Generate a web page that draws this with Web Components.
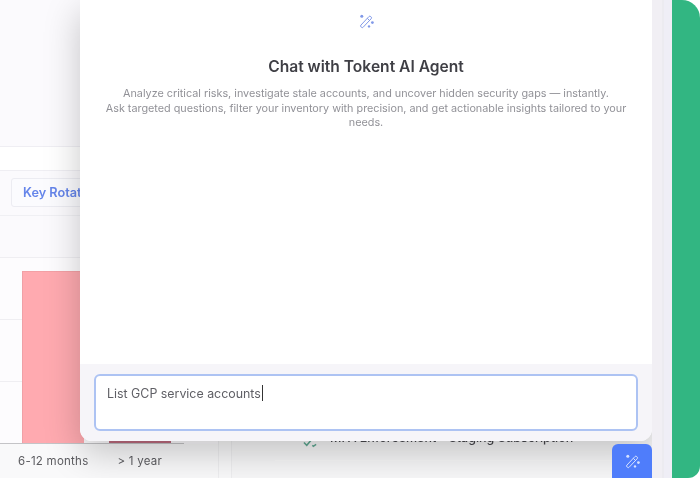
<!DOCTYPE html>
<html lang="en">
<head>
<meta charset="utf-8">
<title>Chat with Tokent AI Agent</title>
<style>
  html, body { margin: 0; height: 100%; overflow: hidden; background: #fff; }
  body { font-family: Inter, "Liberation Sans", sans-serif; }
</style>
</head>
<body>
<app-shell>
  <dash-backdrop></dash-backdrop>
  <chat-panel>
    <chat-input slot="footer" value="List GCP service accounts"></chat-input>
  </chat-panel>
</app-shell>

<script>
// Wand with sparkles, used in the chat header and on the launcher button
class WandIcon extends HTMLElement {
  constructor() {
    super();
    const shadow = this.attachShadow({ mode: 'open' });
    shadow.innerHTML = `
      <style>
        :host { display: inline-flex; width: 16px; height: 16px; color: inherit; }
        svg { width: 100%; height: 100%; display: block; }
      </style>
      <svg viewBox="0 0 16 16" fill="none" stroke="currentColor" stroke-width="1" stroke-linejoin="round">
        <path d="M3 12 10.9 3.6a1.3 1.3 0 0 1 1.9 0l.3.3a1.3 1.3 0 0 1 0 1.9L5.2 14.2a1.3 1.3 0 0 1-1.9 0l-.3-.3a1.3 1.3 0 0 1 0-1.9Z"/>
        <path d="M9.3 5.3l2.2 2.2"/>
        <g fill="currentColor" stroke="none">
          <circle cx="3.8" cy="3.2" r="1.5"/>
          <circle cx="14.4" cy="9.6" r="1.4"/>
          <circle cx="11" cy="13.4" r="1.2"/>
        </g>
      </svg>
    `;
  }
}

// The dashboard that sits dimmed behind the chat panel
class DashBackdrop extends HTMLElement {
  constructor() {
    super();
    const shadow = this.attachShadow({ mode: 'open' });
    shadow.innerHTML = `
      <style>
        :host {
          display: grid;
          grid-template-columns: 218px 14px 1fr;
          height: 100%;
          background: #fbfafd;
          color: #55555c;
          font-size: 11px;
        }
        .left { display: flex; flex-direction: column; min-width: 0; overflow: hidden; }
        .head { height: 146px; border-bottom: 1px solid #efeef3; }
        .search { height: 23px; background: #fff; border-bottom: 1px solid #efeef3; }
        .tabs { height: 45px; padding: 7px 0 0 11px; border-bottom: 1px solid #f0f0f4; box-sizing: border-box; }
        .tab {
          width: 110px; height: 29px; padding: 0 0 0 11px; box-sizing: border-box;
          display: flex; align-items: center;
          background: #fbfbfe; border: 1px solid #ececf2; border-radius: 3px;
          color: #6585ea; font-size: 12.7px; font-weight: 600; white-space: nowrap;
        }
        .legend { height: 41px; }
        /* faint grid lines behind the bars, one every 62px */
        .plot {
          flex: 1; display: flex; align-items: flex-end; gap: 25px; padding: 0 46px 0 22px;
          background: repeating-linear-gradient(to bottom, #efeef2 0 1px, #fdfcfe 1px 62px);
        }
        .bar { width: 62px; }
        .bar.tall { height: 172px; background: #ffaab0; border-top: 1px solid #f3a0a5; border-left: 1px solid #f0a0a6; box-sizing: border-box; }
        .bar.low { height: 2px; background: #bd6b7e; }
        .axis { height: 1px; margin-right: 34px; background: #c4c4c7; }
        .labels {
          height: 34px; display: flex; align-items: center;
          padding-left: 18px; gap: 29px;
          font-size: 11.5px; letter-spacing: .25px; color: #5c5c60;
          background: #f9f9fa;
        }
        .gutter { background: #f9f9fa; border-left: 1px solid #eeeef0; border-right: 1px solid #eeeef0; }
        .right { display: flex; flex-direction: column; padding-left: 30px; min-width: 0; background: #f7f7f8; }
        .cards { flex: 1; border-left: 1px solid #f0f0f3; }
        .row {
          height: 48px; margin-left: 13px; padding: 0 0 0 28px; box-sizing: border-box;
          display: flex; align-items: flex-start;
          color: #47474d; font-size: 12.5px; font-weight: 500; line-height: 16px;
          white-space: nowrap; overflow: hidden;
          background: linear-gradient(to bottom, transparent 0 30px, #fafafa 30px 31px, transparent 31px);
        }
        .row svg { width: 15px; height: 15px; flex: none; margin: 5px 12px 0 0; }
      </style>
      <div class="left">
        <div class="head"></div>
        <div class="search"></div>
        <div class="tabs"><div class="tab">Key Rotation</div></div>
        <div class="legend"></div>
        <div class="plot"><div class="bar tall"></div><div class="bar low"></div></div>
        <div class="axis"></div>
        <div class="labels"><span>6-12 months</span><span>&gt; 1 year</span></div>
      </div>
      <div class="gutter"></div>
      <div class="right">
        <div class="cards"></div>
        <div class="row">
          <svg viewBox="0 0 16 16" fill="none" stroke="#5ea892" stroke-width="1.6"><path d="M1 8l3 3 5-6M10 11l1 1 3-2"/></svg>
          <span>MFA Enforcement - Staging Subscription</span>
        </div>
      </div>
    `;
  }
}

// Text box at the bottom of the chat panel, with its caret
class ChatInput extends HTMLElement {
  constructor() {
    super();
    const shadow = this.attachShadow({ mode: 'open' });
    shadow.innerHTML = `
      <style>
        :host {
          display: block; height: 57px; box-sizing: border-box;
          padding: 9px 11px;
          background: #fff; border: 2px solid #adc3f3; border-radius: 6px;
          color: #5f5f65; font-size: 12.4px; line-height: 17px;
        }
        .caret { display: inline-block; width: 1px; height: 16px; background: #333; vertical-align: -3px; margin-left: 1px; }
      </style>
      <span class="text"></span><span class="caret"></span>
    `;
  }

  connectedCallback() {
    this.shadowRoot.querySelector('.text').textContent = this.getAttribute('value') || '';
  }
}

// Side panel with the agent intro and the input area
class ChatPanel extends HTMLElement {
  constructor() {
    super();
    const shadow = this.attachShadow({ mode: 'open' });
    shadow.innerHTML = `
      <style>
        :host {
          position: absolute; left: 80px; top: 0; width: 572px; height: 441px;
          display: flex; flex-direction: column;
          background: #fff; border-radius: 0 0 12px 12px;
          box-shadow: 0 12px 36px rgba(0, 0, 0, .22);
          overflow: hidden;
        }
        .intro { flex: 1; display: flex; flex-direction: column; align-items: center; padding-top: 13px; text-align: center; }
        wand-icon { color: #8199e8; }
        h2 { margin: 28px 0 0; font-size: 15.6px; line-height: 20px; font-weight: 600; color: #3f3f45; }
        p { margin: 10px 0 0; width: 540px; font-size: 10.8px; line-height: 14.5px; color: #919197; }
        .footer { padding: 10px 14px 10px; background: #f6f5f9; }
      </style>
      <div class="intro">
        <wand-icon></wand-icon>
        <h2>Chat with Tokent AI Agent</h2>
        <p>Analyze critical risks, investigate stale accounts, and uncover hidden security gaps — instantly.<br>Ask targeted questions, filter your inventory with precision, and get actionable insights tailored to your needs.</p>
      </div>
      <div class="footer"><slot name="footer"></slot></div>
    `;
  }
}

// Page frame: dashboard area on the left, green edge on the right
class AppShell extends HTMLElement {
  constructor() {
    super();
    const shadow = this.attachShadow({ mode: 'open' });
    shadow.innerHTML = `
      <style>
        :host { display: flex; width: 700px; height: 478px; background: #fff; overflow: hidden; }
        /* the reference is a soft video frame, so everything but the edge is slightly blurred */
        .main { position: relative; flex: 1; min-width: 0; overflow: hidden; filter: blur(.35px); }
        .strip {
          position: absolute; right: 0; top: 0; bottom: 0; width: 20px;
          background: linear-gradient(to right, #f1eff4 0 10px, #ecebf0 10px 12px, #efeef6 12px);
        }
        .edge { width: 28px; background: #32b682; border-radius: 0 18px 12px 0; }
        .launcher {
          position: absolute; left: 612px; bottom: 0; width: 40px; height: 34px;
          display: flex; align-items: center; justify-content: center;
          background: #4f7dfb; border-radius: 6px 6px 0 0; color: #d6e2ff;
        }
      </style>
      <div class="main">
        <slot></slot>
        <div class="strip"></div>
        <div class="launcher"><wand-icon></wand-icon></div>
      </div>
      <div class="edge"></div>
    `;
  }
}

customElements.define('wand-icon', WandIcon);
customElements.define('dash-backdrop', DashBackdrop);
customElements.define('chat-input', ChatInput);
customElements.define('chat-panel', ChatPanel);
customElements.define('app-shell', AppShell);
</script>
</body>
</html>
